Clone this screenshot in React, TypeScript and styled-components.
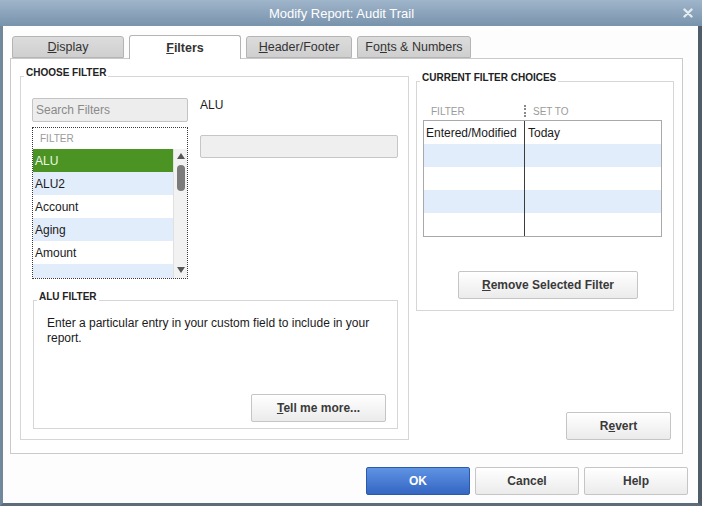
import styled, { createGlobalStyle } from 'styled-components';

const GlobalStyle = createGlobalStyle`
  html, body {
    margin: 0;
    padding: 0;
    background: #ffffff;
  }
  body {
    font-family: "Liberation Sans", Arial, sans-serif;
    font-size: 12px;
    color: #1a1a1a;
  }
  * {
    box-sizing: border-box;
  }
`;

const Window = styled.div`
  width: 702px;
  height: 506px;
  display: flex;
  flex-direction: column;
`;

const TitleBar = styled.div`
  height: 26px;
  flex: none;
  display: flex;
  align-items: center;
  background: linear-gradient(#9fb5ca, #7893ad);
`;

const Title = styled.div`
  flex: 1;
  text-align: center;
  color: #ffffff;
  font-size: 13px;
`;

const CloseBox = styled.div`
  width: 19px;
  display: flex;
  align-items: center;
`;

const Frame = styled.div`
  flex: 1;
  display: flex;
  border-left: 3px solid #71879b;
  border-right: 4px solid #505c68;
  border-bottom: 3px solid #5e6c79;
`;

const Body = styled.div`
  flex: 1;
  display: flex;
  flex-direction: column;
  background: #fdfdfd;
  padding: 9px 10px 0 7px;
`;

const TabRow = styled.div`
  height: 23px;
  flex: none;
  display: flex;
  align-items: flex-end;
  gap: 5px;
  padding-left: 2px;
`;

const Tab = styled.div<{ $w: number; $active?: boolean }>`
  width: ${p => p.$w}px;
  height: ${p => (p.$active ? 24 : 22)}px;
  margin-bottom: ${p => (p.$active ? -1 : 0)}px;
  position: relative;
  z-index: ${p => (p.$active ? 1 : 0)};
  border: 1px solid #b4b4b4;
  border-bottom: ${p => (p.$active ? 'none' : '1px solid #b4b4b4')};
  border-radius: 3px 3px 0 0;
  background: ${p => (p.$active ? '#ffffff' : 'linear-gradient(#dcdcdc, #cfcfcf)')};
  display: flex;
  align-items: center;
  justify-content: center;
  font-size: 12.5px;
  font-weight: ${p => (p.$active ? 'bold' : 'normal')};
  color: #333333;
`;

const Panel = styled.div`
  width: 673px;
  height: 396px;
  flex: none;
  border: 1px solid #cacaca;
  background: #ffffff;
  display: flex;
  gap: 7px;
  padding: 17px 0 13px 9px;
`;

const Group = styled.div<{ $w: number; $h: number }>`
  position: relative;
  width: ${p => p.$w}px;
  height: ${p => p.$h}px;
  flex: none;
  border: 1px solid #d6d6d6;
`;

const Legend = styled.span`
  position: absolute;
  top: -10px;
  left: 3px;
  padding: 0 2px;
  background: #ffffff;
  font-size: 10px;
  font-weight: bold;
  line-height: 12px;
  color: #222222;
  white-space: nowrap;
`;

const ChooseBody = styled.div`
  height: 100%;
  display: flex;
  flex-direction: column;
  padding: 21px 10px 10px 11px;
`;

const PickerRow = styled.div`
  display: grid;
  grid-template-columns: 156px 1fr;
  column-gap: 12px;
`;

const PickerColumn = styled.div`
  display: flex;
  flex-direction: column;
  gap: 5px;
`;

const SearchBox = styled.input`
  width: 156px;
  height: 24px;
  border: 1px solid #c4c4c4;
  border-radius: 2px;
  background: #ededed;
  padding: 0 3px;
  font-family: "Liberation Sans", Arial, sans-serif;
  font-size: 12px;
  color: #333333;
  outline: none;
  &::placeholder {
    color: #8a8a8a;
  }
`;

const FilterList = styled.div`
  height: 152px;
  border: 1px dotted #3a3a3a;
  display: flex;
  flex-direction: column;
`;

const ListHeader = styled.div`
  height: 21px;
  flex: none;
  line-height: 22px;
  padding-left: 7px;
  font-size: 10px;
  color: #9b9b9b;
`;

const ListBody = styled.div`
  flex: 1;
  display: flex;
  overflow: hidden;
`;

const Rows = styled.div`
  flex: 1;
  display: flex;
  flex-direction: column;
  overflow: hidden;
`;

const ListRow = styled.div<{ $tone: 'sel' | 'alt' | 'plain' }>`
  height: 23px;
  flex: none;
  line-height: 24px;
  padding-left: 2px;
  font-size: 12px;
  background: ${p => (p.$tone === 'sel' ? '#4b9424' : p.$tone === 'alt' ? '#e2edfb' : '#ffffff')};
  color: ${p => (p.$tone === 'sel' ? '#eef9e6' : '#1a1a1a')};
`;

const ScrollBar = styled.div`
  width: 14px;
  flex: none;
  background: #f2f2f2;
  border-left: 1px solid #e0e0e0;
  display: flex;
  flex-direction: column;
  align-items: center;
`;

const Thumb = styled.div`
  width: 8px;
  height: 26px;
  margin-top: 2px;
  border-radius: 4px;
  background: #7b7b7b;
`;

const ScrollSpacer = styled.div`
  flex: 1;
`;

const ValueColumn = styled.div`
  display: flex;
  flex-direction: column;
`;

const ValueLabel = styled.div`
  line-height: 14px;
  font-size: 12px;
`;

const ValueInput = styled.div`
  margin-top: 23px;
  width: 198px;
  height: 23px;
  border: 1px solid #c6c6c6;
  border-radius: 2px;
  background: #efefef;
`;

const FieldBody = styled.div`
  height: 100%;
  display: flex;
  flex-direction: column;
  padding: 15px 11px 6px 13px;
`;

const Description = styled.p`
  margin: 0;
  line-height: 15px;
  font-size: 12px;
  color: #1a1a1a;
`;

const Button = styled.button<{ $w: number; $primary?: boolean }>`
  width: ${p => p.$w}px;
  height: 28px;
  flex: none;
  border: 1px solid ${p => (p.$primary ? '#2c59a8' : '#c5c5c5')};
  border-radius: 2px;
  background: ${p => (p.$primary ? 'linear-gradient(#5f93e3, #3466c3)' : 'linear-gradient(#ffffff, #ebebeb)')};
  color: ${p => (p.$primary ? '#ffffff' : '#3a3a3a')};
  font-family: "Liberation Sans", Arial, sans-serif;
  font-size: 12px;
  font-weight: bold;
  padding: 0;
  cursor: pointer;
`;

const RightColumn = styled.div`
  width: 258px;
  margin-top: 5px;
  display: flex;
  flex-direction: column;
`;

const ChoicesBody = styled.div`
  height: 100%;
  display: flex;
  flex-direction: column;
  padding: 20px 11px 11px 6px;
`;

const ChoicesHeader = styled.div`
  height: 18px;
  display: grid;
  grid-template-columns: 101px 1fr;
  align-items: center;
  font-size: 10px;
  color: #9b9b9b;
`;

const HeaderCell = styled.div<{ $split?: boolean }>`
  display: flex;
  align-items: center;
  gap: 7px;
  padding-left: ${p => (p.$split ? 0 : 8)}px;
`;

const Separator = styled.span`
  width: 0;
  height: 12px;
  border-left: 2px dotted #8a8a8a;
`;

const ChoicesTable = styled.div`
  width: 239px;
  border: 1px solid #a9a9a9;
  display: flex;
  flex-direction: column;
`;

const ChoiceRow = styled.div<{ $alt?: boolean }>`
  height: 23px;
  display: grid;
  grid-template-columns: 101px 1fr;
  background: ${p => (p.$alt ? '#e2edfb' : '#ffffff')};
  font-size: 12px;
  line-height: 24px;
`;

const ChoiceCell = styled.div<{ $first?: boolean }>`
  padding-left: ${p => (p.$first ? 2 : 3)}px;
  border-right: ${p => (p.$first ? '1px solid #3c3c3c' : 'none')};
  white-space: nowrap;
  overflow: hidden;
`;

const Footer = styled.div`
  display: flex;
  justify-content: flex-end;
  gap: 5px;
  margin-top: 13px;
`;

function UpArrow() {
  return (
    <svg width="14" height="14" viewBox="0 0 14 14" style={{ flex: 'none' }}>
      <polygon points="3,10 11,10 7,4" fill="#555555" />
    </svg>
  );
}

function DownArrow() {
  return (
    <svg width="14" height="14" viewBox="0 0 14 14" style={{ flex: 'none' }}>
      <polygon points="3,3 11,3 7,9" fill="#555555" />
    </svg>
  );
}

const filters: { name: string; tone: 'sel' | 'alt' | 'plain' }[] = [
  { name: 'ALU', tone: 'sel' },
  { name: 'ALU2', tone: 'alt' },
  { name: 'Account', tone: 'plain' },
  { name: 'Aging', tone: 'alt' },
  { name: 'Amount', tone: 'plain' },
  { name: '', tone: 'alt' },
];

const choices = [
  ['Entered/Modified', 'Today'],
  ['', ''],
  ['', ''],
  ['', ''],
  ['', ''],
];

export default function App() {
  return (
    <>
      <GlobalStyle />
      <Window>
        <TitleBar>
          <Title>Modify Report: Audit Trail</Title>
          <CloseBox>
            <svg width="10" height="10" viewBox="0 0 10 10">
              <path d="M1.5 1.5 L8.5 8.5 M8.5 1.5 L1.5 8.5" stroke="#e4ebf1" strokeWidth="2.4" strokeLinecap="round" />
            </svg>
          </CloseBox>
        </TitleBar>
        <Frame>
          <Body>
            <TabRow>
              <Tab $w={112}><u>D</u>isplay</Tab>
              <Tab $w={112} $active><u>F</u>ilters</Tab>
              <Tab $w={106}><u>H</u>eader/Footer</Tab>
              <Tab $w={114}>Fo<u>n</u>ts &amp; Numbers</Tab>
            </TabRow>
            <Panel>
              <Group $w={389} $h={364}>
                <Legend>CHOOSE FILTER</Legend>
                <ChooseBody>
                  <PickerRow>
                    <PickerColumn>
                      <SearchBox placeholder="Search Filters" readOnly />
                      <FilterList>
                        <ListHeader>FILTER</ListHeader>
                        <ListBody>
                          <Rows>
                            {filters.map((f, i) => (
                              <ListRow key={i} $tone={f.tone}>{f.name}</ListRow>
                            ))}
                          </Rows>
                          <ScrollBar>
                            <UpArrow />
                            <Thumb />
                            <ScrollSpacer />
                            <DownArrow />
                          </ScrollBar>
                        </ListBody>
                      </FilterList>
                    </PickerColumn>
                    <ValueColumn>
                      <ValueLabel>ALU</ValueLabel>
                      <ValueInput />
                    </ValueColumn>
                  </PickerRow>
                  <div style={{ marginTop: 'auto', marginLeft: 1 }}>
                    <Group $w={365} $h={129}>
                      <Legend>ALU FILTER</Legend>
                      <FieldBody>
                        <Description>Enter a particular entry in your custom field to include in your report.</Description>
                        <Button $w={135} style={{ marginTop: 'auto', alignSelf: 'flex-end' }}>
                          <u>T</u>ell me more...
                        </Button>
                      </FieldBody>
                    </Group>
                  </div>
                </ChooseBody>
              </Group>
              <RightColumn>
                <Group $w={258} $h={230}>
                  <Legend>CURRENT FILTER CHOICES</Legend>
                  <ChoicesBody>
                    <ChoicesHeader>
                      <HeaderCell>FILTER</HeaderCell>
                      <HeaderCell $split>
                        <Separator />
                        SET TO
                      </HeaderCell>
                    </ChoicesHeader>
                    <ChoicesTable>
                      {choices.map((c, i) => (
                        <ChoiceRow key={i} $alt={i % 2 === 1}>
                          <ChoiceCell $first>{c[0]}</ChoiceCell>
                          <ChoiceCell>{c[1]}</ChoiceCell>
                        </ChoiceRow>
                      ))}
                    </ChoicesTable>
                    <Button $w={180} style={{ marginTop: 34, marginLeft: 35 }}>
                      <u>R</u>emove Selected Filter
                    </Button>
                  </ChoicesBody>
                </Group>
                <Button $w={105} style={{ marginTop: 'auto', alignSelf: 'flex-end', marginRight: 3 }}>
                  R<u>e</u>vert
                </Button>
              </RightColumn>
            </Panel>
            <Footer>
              <Button $w={104} $primary>OK</Button>
              <Button $w={104}>Cancel</Button>
              <Button $w={104}>Help</Button>
            </Footer>
          </Body>
        </Frame>
      </Window>
    </>
  );
}
